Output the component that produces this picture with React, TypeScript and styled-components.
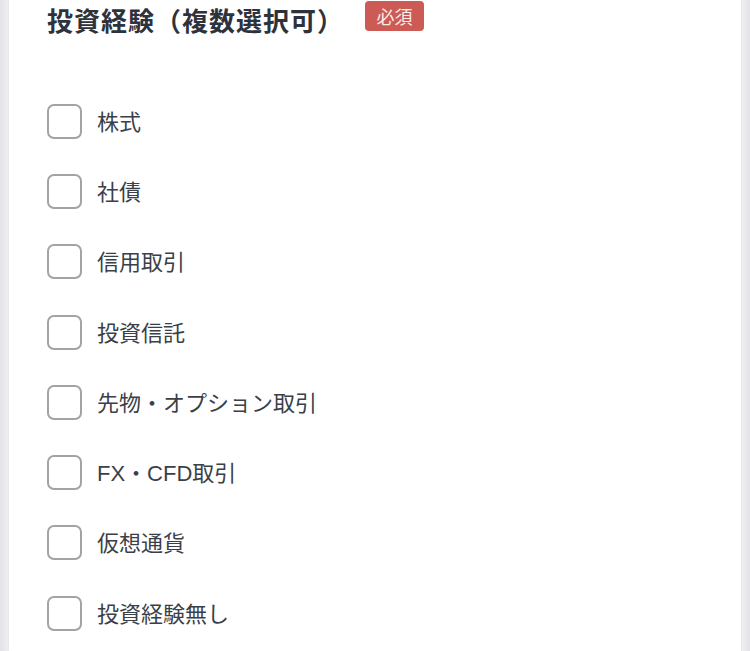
import styled, { createGlobalStyle } from 'styled-components'

const GlobalStyle = createGlobalStyle`
	html, body {
		margin: 0;
		padding: 0;
		background: #e8e8ec;
	}
	body {
		font-family: "Liberation Sans", "Noto Sans CJK JP", sans-serif;
	}
`

const Page = styled.div`
	width: 750px;
	height: 651px;
	overflow: hidden;
	padding: 0 9px;
	box-sizing: border-box;
	background: linear-gradient(to right, #e2e2e7 0, #efeff2 8px, #efeff2 742px, #e2e2e7 750px);
`

const Card = styled.div`
	background: #ffffff;
	height: 100%;
	padding: 0 38px;
	box-shadow: 0 0 2px rgba(0, 0, 0, 0.08);
`

const Header = styled.div`
	display: flex;
	align-items: center;
	height: 38px;
	gap: 21px;
`

const Title = styled.h2`
	margin: 0;
	font-family: "Noto Sans CJK JP", sans-serif;
	font-size: 26px;
	font-weight: 700;
	color: #2d323c;
	letter-spacing: 1px;
`

const Badge = styled.span`
	display: inline-flex;
	align-items: center;
	justify-content: center;
	height: 30px;
	width: 59px;
	box-sizing: border-box;
	border-radius: 4px;
	background: #cc5a55;
	color: #fbeceb;
	font-family: "Noto Sans CJK JP", sans-serif;
	font-size: 18px;
	margin-top: -6px;
`

const List = styled.ul`
	list-style: none;
	margin: 48px 0 0;
	padding: 0;
`

const Row = styled.li`
	display: flex;
	align-items: center;
	height: 70.3px;
	gap: 15px;
`

const Box = styled.span`
	width: 35px;
	height: 35px;
	box-sizing: border-box;
	border: 2px solid #a2a3a6;
	border-radius: 7px;
	background: #fff;
	flex-shrink: 0;
`

const Label = styled.span`
	font-size: 22px;
	color: #3b3f48;
	margin-top: -3px;
`

const options = [
	'株式',
	'社債',
	'信用取引',
	'投資信託',
	'先物・オプション取引',
	'FX・CFD取引',
	'仮想通貨',
	'投資経験無し',
]

export default function App() {
	return (
		<>
			<GlobalStyle />
			<Page>
				<Card>
					<Header>
						<Title>投資経験（複数選択可）</Title>
						<Badge>必須</Badge>
					</Header>
					<List>
						{options.map(o => (
							<Row key={o}>
								<Box />
								<Label>{o}</Label>
							</Row>
						))}
					</List>
				</Card>
			</Page>
		</>
	)
}
